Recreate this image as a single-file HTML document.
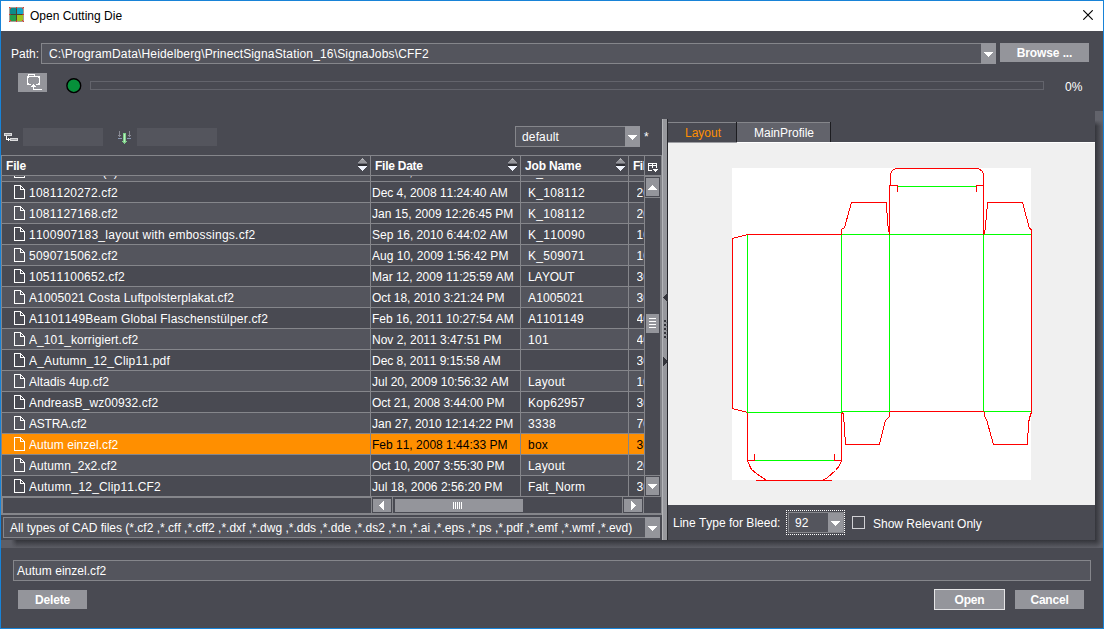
<!DOCTYPE html>
<html>
<head>
<meta charset="utf-8">
<title>Open Cutting Die</title>
<style>
html,body{margin:0;padding:0;}
body{font-kerning:none;text-rendering:optimizeSpeed;width:1104px;height:629px;overflow:hidden;background:#494a52;font-family:"Liberation Sans",sans-serif;font-size:12px;color:#fff;position:relative;}
.abs{position:absolute;}
#title{position:absolute;left:1px;top:1px;width:1102px;height:30px;background:#fff;color:#000;}
#title .t{position:absolute;left:29px;top:7px;font-size:12px;line-height:16px;white-space:nowrap;}
.fld{position:absolute;box-sizing:border-box;border:1px solid #85868b;background:#54555d;white-space:nowrap;overflow:hidden;}
.btn{position:absolute;box-sizing:border-box;background:#94959b;color:#fff;font-weight:bold;text-align:center;white-space:nowrap;}
.arrow{position:absolute;background:#94959b;}
.arrow svg{position:absolute;}

.txt{position:absolute;white-space:nowrap;line-height:14px;}
/* table */
#tbl{position:absolute;left:0;top:155px;width:662px;height:360px;overflow:hidden;}
#rows{position:absolute;left:1px;top:21px;width:644px;height:321px;overflow:hidden;}
.row{position:absolute;left:0;width:644px;height:20px;border-bottom:1px solid #85868b;}
.row.a{background:#494a52;}
.row.b{background:#54555d;}
.row.sel{background:#ff8f00;}
.dk{position:absolute;left:370px;top:0;width:149px;height:20px;background:#494a52;}
.row.sel .k{color:#000;}
.c{position:absolute;top:4px;line-height:14px;white-space:nowrap;overflow:hidden;height:16px;}
.c1{left:28px;width:338px;}
.c2{left:371px;width:147px;}
.c3{left:527px;width:98px;}
.c4{left:635.5px;width:7.5px;}
.ico{position:absolute;left:13px;top:3px;width:11px;height:14px;}
.vl{position:absolute;width:1px;background:#85868b;}
.hl{position:absolute;height:1px;background:#85868b;}
.hd{position:absolute;top:4px;font-weight:bold;line-height:14px;white-space:nowrap;}
.sort{position:absolute;top:3px;width:9px;height:14px;}
</style>
</head>
<body>
<div id="title">
<svg class="abs" style="left:7px;top:5px" width="17" height="17" viewBox="0 0 17 17">
<rect x="1.5" y="1.5" width="14" height="14" fill="#4d4130"/>
<rect x="2" y="2" width="6" height="6" fill="#0d8b8a"/>
<rect x="9" y="2" width="6" height="6" fill="#13a6c9"/>
<rect x="2" y="9" width="6" height="6" fill="#23a04a"/>
<rect x="9" y="9" width="6" height="6" fill="#9cc51f"/>
<path d="M1 1 L3 3 M16 1 L14 3 M1 16 L3 14 M16 16 L14 14 M1 8.5 H2.5 M14.5 8.5 H16 M8.5 1 V2.5 M8.5 14.5 V16" stroke="#e5352b" stroke-width="1" fill="none"/>
</svg>
<div class="t">Open Cutting Die</div>
<svg class="abs" style="left:1082px;top:9px" width="10" height="10" viewBox="0 0 10 10"><path d="M0.3 0.3 L9.7 9.7 M9.7 0.3 L0.3 9.7" stroke="#000" stroke-width="1.15" fill="none"/></svg>
</div>

<!-- path row -->
<div class="txt" style="left:11px;top:47px;">Path:</div>
<div class="fld" style="left:41px;top:43px;width:955px;height:21px;"><div class="txt" style="letter-spacing:0.163px;left:7px;top:3px;">C:\ProgramData\Heidelberg\PrinectSignaStation_16\SignaJobs\CFF2</div></div>
<div class="arrow" style="left:981px;top:43px;width:15px;height:21px;"><svg style="left:3px;top:9px" width="9" height="5" shape-rendering="crispEdges"><path d="M0 0h9v1h-9z M1 1h7v1h-7z M2 2h5v1h-5z M3 3h3v1h-3z M4 4h1v1h-1z" fill="#fff"/></svg></div>
<div class="btn" style="left:1000px;top:43px;width:89px;height:19px;line-height:21px;letter-spacing:-0.1px;">Browse ...</div>

<!-- progress row -->
<div class="btn" style="left:18px;top:73px;width:29px;height:19px;">
<svg class="abs" style="left:0;top:0" width="29" height="19" viewBox="0 0 29 19" shape-rendering="crispEdges"><path d="M10.5 3 V1.5 H16.5 V3 M13 11.5 H9.5 V3.5 H21.5 V11.5 H18" fill="none" stroke="#fff" stroke-width="1"/><path d="M10 4h1v1h-1z M20 4h1v1h-1z M10 10h1v1h-1z M20 10h1v1h-1z M15 11h1v1h-1z M14 12h3v1h-3z M13 13h5v1h-5z M15 14h1v3h-1z M15 16h9v1h-9z" fill="#fff"/></svg>
</div>
<svg class="abs" style="left:64px;top:76px" width="20" height="20" viewBox="64 76 20 20"><circle cx="73.8" cy="85.7" r="6.9" fill="#06903a" stroke="#000" stroke-width="1.4"/></svg>
<div class="abs" style="left:90px;top:81px;width:952px;height:7px;border:1px solid #63646c;"></div>
<div class="txt" style="left:1065px;top:80px;">0%</div>

<!-- filter row -->
<svg class="abs" style="left:4px;top:133px" width="14" height="8" viewBox="0 0 14 8" shape-rendering="crispEdges"><rect x="0.5" y="0.5" width="7" height="2" fill="#a4a5aa" stroke="#dcdcde"/><rect x="6.5" y="5.5" width="7" height="2" fill="#a4a5aa" stroke="#dcdcde"/><path d="M2 3h1v4h-1z M2 6h4v1h-4z M4 5h1v3h-1z" fill="#fff"/></svg>
<svg class="abs" style="left:118px;top:131px" width="13" height="13" viewBox="0 0 13 13" shape-rendering="crispEdges"><path d="M1 0h1v6h-1z M0 4h3v1h-3z M11 0h1v6h-1z M10 4h3v1h-3z" fill="#8a8b95"/><path d="M0 7h4v1h-4z M9 7h4v1h-4z" fill="#8a9ab5"/><path d="M5 2h3v8h-3z M4 10h5v1h-5z M5 11h3v1h-3z M6 12h1v1h-1z" fill="#7fd08a"/><path d="M6 3h1v8h-1z" fill="#b9f2c0"/></svg>
<div class="abs" style="left:23px;top:128px;width:80px;height:18px;background:#54555d;"></div>
<div class="abs" style="left:137px;top:128px;width:80px;height:18px;background:#54555d;"></div>
<div class="fld" style="left:515px;top:126px;width:125px;height:21px;"><div class="txt" style="letter-spacing:0.139px;left:6px;top:3px;">default</div></div>
<div class="arrow" style="left:625px;top:126px;width:15px;height:21px;"><svg style="left:3px;top:9px" width="9" height="5" shape-rendering="crispEdges"><path d="M0 0h9v1h-9z M1 1h7v1h-7z M2 2h5v1h-5z M3 3h3v1h-3z M4 4h1v1h-1z" fill="#fff"/></svg></div>
<div class="txt" style="left:644px;top:130px;">*</div>

<div id="tbl">
<div class="hl" style="left:1px;top:0;width:661px;"></div>
<div class="hl" style="left:1px;top:20px;width:661px;"></div>
<div class="hd" style="left:6px;letter-spacing:-0.2px;">File</div>
<div class="hd" style="left:375px;letter-spacing:-0.25px;">File Date</div>
<div class="hd" style="left:525px;letter-spacing:-0.15px;">Job Name</div>
<div class="hd" style="left:633px;width:11px;overflow:hidden;letter-spacing:-0.5px;">File</div>
<svg class="sort" style="left:358px" viewBox="0 0 9 14" shape-rendering="crispEdges"><path d="M4 0h1v1h-1z M3 1h3v1h-3z" fill="#b0b1b5"/><path d="M2 2h5v1h-5z M1 3h7v1h-7z M0 4h9v1h-9z" fill="#94959b"/><path d="M0 5h9v1h-9z" fill="#6c6d75"/><path d="M0 6h9v2h-9z" fill="#2c2d33"/><path d="M0 8h9v1h-9z M1 9h7v1h-7z M2 10h5v1h-5z M3 11h3v1h-3z M4 12h1v1h-1z" fill="#eef2fb"/></svg><svg class="sort" style="left:508px" viewBox="0 0 9 14" shape-rendering="crispEdges"><path d="M4 0h1v1h-1z M3 1h3v1h-3z" fill="#b0b1b5"/><path d="M2 2h5v1h-5z M1 3h7v1h-7z M0 4h9v1h-9z" fill="#94959b"/><path d="M0 5h9v1h-9z" fill="#6c6d75"/><path d="M0 6h9v2h-9z" fill="#2c2d33"/><path d="M0 8h9v1h-9z M1 9h7v1h-7z M2 10h5v1h-5z M3 11h3v1h-3z M4 12h1v1h-1z" fill="#eef2fb"/></svg><svg class="sort" style="left:616px" viewBox="0 0 9 14" shape-rendering="crispEdges"><path d="M4 0h1v1h-1z M3 1h3v1h-3z" fill="#b0b1b5"/><path d="M2 2h5v1h-5z M1 3h7v1h-7z M0 4h9v1h-9z" fill="#94959b"/><path d="M0 5h9v1h-9z" fill="#6c6d75"/><path d="M0 6h9v2h-9z" fill="#2c2d33"/><path d="M0 8h9v1h-9z M1 9h7v1h-7z M2 10h5v1h-5z M3 11h3v1h-3z M4 12h1v1h-1z" fill="#eef2fb"/></svg>
<div id="rows">
<div class="row b" style="top:-15px"><svg class="ico" viewBox="0 0 11 14" shape-rendering="crispEdges"><path d="M0.5 0.5 H6.5 L10.5 4.5 V13.5 H0.5 Z" fill="none" stroke="#fff" stroke-width="1"/><path d="M6.5 0.5 V4.5 H10.5" fill="none" stroke="#fff" stroke-width="1"/></svg><div class="dk"></div><div class="c c1" style="letter-spacing:0.301px">1081120272 (2).cf2</div><div class="c c2" style="letter-spacing:-0.012px">Mar 12, 2009 11:25:59 AM</div><div class="c c3" style="letter-spacing:0.285px">K_108112</div><div class="c c4" style="letter-spacing:0.062px">20 KB</div></div>
<div class="row a" style="top:6px"><svg class="ico" viewBox="0 0 11 14" shape-rendering="crispEdges"><path d="M0.5 0.5 H6.5 L10.5 4.5 V13.5 H0.5 Z" fill="none" stroke="#fff" stroke-width="1"/><path d="M6.5 0.5 V4.5 H10.5" fill="none" stroke="#fff" stroke-width="1"/></svg><div class="c c1" style="letter-spacing:0.209px">1081120272.cf2</div><div class="c c2" style="letter-spacing:-0.013px">Dec 4, 2008 11:24:40 AM</div><div class="c c3" style="letter-spacing:0.285px">K_108112</div><div class="c c4" style="letter-spacing:0.062px">20 KB</div></div>
<div class="row b" style="top:27px"><svg class="ico" viewBox="0 0 11 14" shape-rendering="crispEdges"><path d="M0.5 0.5 H6.5 L10.5 4.5 V13.5 H0.5 Z" fill="none" stroke="#fff" stroke-width="1"/><path d="M6.5 0.5 V4.5 H10.5" fill="none" stroke="#fff" stroke-width="1"/></svg><div class="dk"></div><div class="c c1" style="letter-spacing:0.209px">1081127168.cf2</div><div class="c c2" style="letter-spacing:0.026px">Jan 15, 2009 12:26:45 PM</div><div class="c c3" style="letter-spacing:0.285px">K_108112</div><div class="c c4" style="letter-spacing:0.062px">20 KB</div></div>
<div class="row a" style="top:48px"><svg class="ico" viewBox="0 0 11 14" shape-rendering="crispEdges"><path d="M0.5 0.5 H6.5 L10.5 4.5 V13.5 H0.5 Z" fill="none" stroke="#fff" stroke-width="1"/><path d="M6.5 0.5 V4.5 H10.5" fill="none" stroke="#fff" stroke-width="1"/></svg><div class="c c1" style="letter-spacing:0.262px">1100907183_layout with embossings.cf2</div><div class="c c2" style="letter-spacing:-0.013px">Sep 16, 2010 6:44:02 AM</div><div class="c c3" style="letter-spacing:0.285px">K_110090</div><div class="c c4" style="letter-spacing:0.062px">10 KB</div></div>
<div class="row b" style="top:69px"><svg class="ico" viewBox="0 0 11 14" shape-rendering="crispEdges"><path d="M0.5 0.5 H6.5 L10.5 4.5 V13.5 H0.5 Z" fill="none" stroke="#fff" stroke-width="1"/><path d="M6.5 0.5 V4.5 H10.5" fill="none" stroke="#fff" stroke-width="1"/></svg><div class="dk"></div><div class="c c1" style="letter-spacing:0.209px">5090715062.cf2</div><div class="c c2" style="letter-spacing:0.013px">Aug 10, 2009 1:56:42 PM</div><div class="c c3" style="letter-spacing:0.285px">K_509071</div><div class="c c4" style="letter-spacing:0.062px">10 KB</div></div>
<div class="row a" style="top:90px"><svg class="ico" viewBox="0 0 11 14" shape-rendering="crispEdges"><path d="M0.5 0.5 H6.5 L10.5 4.5 V13.5 H0.5 Z" fill="none" stroke="#fff" stroke-width="1"/><path d="M6.5 0.5 V4.5 H10.5" fill="none" stroke="#fff" stroke-width="1"/></svg><div class="c c1" style="letter-spacing:0.216px">10511100652.cf2</div><div class="c c2" style="letter-spacing:-0.012px">Mar 12, 2009 11:25:59 AM</div><div class="c c3" style="letter-spacing:-0.294px">LAYOUT</div><div class="c c4" style="letter-spacing:0.062px">30 KB</div></div>
<div class="row b" style="top:111px"><svg class="ico" viewBox="0 0 11 14" shape-rendering="crispEdges"><path d="M0.5 0.5 H6.5 L10.5 4.5 V13.5 H0.5 Z" fill="none" stroke="#fff" stroke-width="1"/><path d="M6.5 0.5 V4.5 H10.5" fill="none" stroke="#fff" stroke-width="1"/></svg><div class="dk"></div><div class="c c1" style="letter-spacing:0.135px">A1005021 Costa Luftpolsterplakat.cf2</div><div class="c c2" style="letter-spacing:-0.044px">Oct 18, 2010 3:21:24 PM</div><div class="c c3" style="letter-spacing:0.129px">A1005021</div><div class="c c4" style="letter-spacing:0.062px">30 KB</div></div>
<div class="row a" style="top:132px"><svg class="ico" viewBox="0 0 11 14" shape-rendering="crispEdges"><path d="M0.5 0.5 H6.5 L10.5 4.5 V13.5 H0.5 Z" fill="none" stroke="#fff" stroke-width="1"/><path d="M6.5 0.5 V4.5 H10.5" fill="none" stroke="#fff" stroke-width="1"/></svg><div class="c c1" style="letter-spacing:0.193px">A1101149Beam Global Flaschenstülper.cf2</div><div class="c c2" style="letter-spacing:-0.013px">Feb 16, 2011 10:27:54 AM</div><div class="c c3" style="letter-spacing:0.129px">A1101149</div><div class="c c4" style="letter-spacing:0.062px">40 KB</div></div>
<div class="row b" style="top:153px"><svg class="ico" viewBox="0 0 11 14" shape-rendering="crispEdges"><path d="M0.5 0.5 H6.5 L10.5 4.5 V13.5 H0.5 Z" fill="none" stroke="#fff" stroke-width="1"/><path d="M6.5 0.5 V4.5 H10.5" fill="none" stroke="#fff" stroke-width="1"/></svg><div class="dk"></div><div class="c c1" style="letter-spacing:0.09px">A_101_korrigiert.cf2</div><div class="c c2">Nov 2, 2011 3:47:51 PM</div><div class="c c3" style="letter-spacing:0.326px">101</div><div class="c c4" style="letter-spacing:0.062px">40 KB</div></div>
<div class="row a" style="top:174px"><svg class="ico" viewBox="0 0 11 14" shape-rendering="crispEdges"><path d="M0.5 0.5 H6.5 L10.5 4.5 V13.5 H0.5 Z" fill="none" stroke="#fff" stroke-width="1"/><path d="M6.5 0.5 V4.5 H10.5" fill="none" stroke="#fff" stroke-width="1"/></svg><div class="c c1" style="letter-spacing:0.193px">A_Autumn_12_Clip11.pdf</div><div class="c c2" style="letter-spacing:-0.028px">Dec 8, 2011 9:15:58 AM</div><div class="c c3"></div><div class="c c4" style="letter-spacing:0.062px">30 KB</div></div>
<div class="row b" style="top:195px"><svg class="ico" viewBox="0 0 11 14" shape-rendering="crispEdges"><path d="M0.5 0.5 H6.5 L10.5 4.5 V13.5 H0.5 Z" fill="none" stroke="#fff" stroke-width="1"/><path d="M6.5 0.5 V4.5 H10.5" fill="none" stroke="#fff" stroke-width="1"/></svg><div class="dk"></div><div class="c c1" style="letter-spacing:0.086px">Altadis 4up.cf2</div><div class="c c2">Jul 20, 2009 10:56:32 AM</div><div class="c c3" style="letter-spacing:0.162px">Layout</div><div class="c c4" style="letter-spacing:0.062px">10 KB</div></div>
<div class="row a" style="top:216px"><svg class="ico" viewBox="0 0 11 14" shape-rendering="crispEdges"><path d="M0.5 0.5 H6.5 L10.5 4.5 V13.5 H0.5 Z" fill="none" stroke="#fff" stroke-width="1"/><path d="M6.5 0.5 V4.5 H10.5" fill="none" stroke="#fff" stroke-width="1"/></svg><div class="c c1" style="letter-spacing:0.122px">AndreasB_wz00932.cf2</div><div class="c c2" style="letter-spacing:-0.044px">Oct 21, 2008 3:44:00 PM</div><div class="c c3" style="letter-spacing:0.285px">Kop62957</div><div class="c c4" style="letter-spacing:0.062px">30 KB</div></div>
<div class="row b" style="top:237px"><svg class="ico" viewBox="0 0 11 14" shape-rendering="crispEdges"><path d="M0.5 0.5 H6.5 L10.5 4.5 V13.5 H0.5 Z" fill="none" stroke="#fff" stroke-width="1"/><path d="M6.5 0.5 V4.5 H10.5" fill="none" stroke="#fff" stroke-width="1"/></svg><div class="dk"></div><div class="c c1" style="letter-spacing:-0.206px">ASTRA.cf2</div><div class="c c2" style="letter-spacing:0.026px">Jan 27, 2010 12:14:22 PM</div><div class="c c3" style="letter-spacing:0.326px">3338</div><div class="c c4" style="letter-spacing:0.062px">70 KB</div></div>
<div class="row sel" style="top:258px"><svg class="ico" viewBox="0 0 11 14" shape-rendering="crispEdges"><path d="M0.5 0.5 H6.5 L10.5 4.5 V13.5 H0.5 Z" fill="none" stroke="#fff" stroke-width="1"/><path d="M6.5 0.5 V4.5 H10.5" fill="none" stroke="#fff" stroke-width="1"/></svg><div class="c c1" style="letter-spacing:0.031px">Autum einzel.cf2</div><div class="c c2 k">Feb 11, 2008 1:44:33 PM</div><div class="c c3 k" style="letter-spacing:0.217px">box</div><div class="c c4 k" style="letter-spacing:0.062px">30 KB</div></div>
<div class="row b" style="top:279px"><svg class="ico" viewBox="0 0 11 14" shape-rendering="crispEdges"><path d="M0.5 0.5 H6.5 L10.5 4.5 V13.5 H0.5 Z" fill="none" stroke="#fff" stroke-width="1"/><path d="M6.5 0.5 V4.5 H10.5" fill="none" stroke="#fff" stroke-width="1"/></svg><div class="dk"></div><div class="c c1" style="letter-spacing:0.092px">Autumn_2x2.cf2</div><div class="c c2" style="letter-spacing:-0.044px">Oct 10, 2007 3:55:30 PM</div><div class="c c3" style="letter-spacing:0.162px">Layout</div><div class="c c4" style="letter-spacing:0.062px">20 KB</div></div>
<div class="row a" style="top:300px"><svg class="ico" viewBox="0 0 11 14" shape-rendering="crispEdges"><path d="M0.5 0.5 H6.5 L10.5 4.5 V13.5 H0.5 Z" fill="none" stroke="#fff" stroke-width="1"/><path d="M6.5 0.5 V4.5 H10.5" fill="none" stroke="#fff" stroke-width="1"/></svg><div class="c c1" style="letter-spacing:0.196px">Autumn_12_Clip11.CF2</div><div class="c c2" style="letter-spacing:0.013px">Jul 18, 2006 2:56:20 PM</div><div class="c c3" style="letter-spacing:0.11px">Falt_Norm</div><div class="c c4" style="letter-spacing:0.062px">30 KB</div></div></div>
<!-- column chooser icon -->
<svg class="abs" style="left:648px;top:8px" width="10" height="9" viewBox="648 163 10 9" shape-rendering="crispEdges"><path d="M648.5 171 V163.5 H656.5 V168 M648 165.5 H657 M652.5 163 V168 M648 170.5 H652" fill="none" stroke="#fff" stroke-width="1"/><path d="M653 169h5v1h-5z M654 170h3v1h-3z M655 171h1v1h-1z" fill="#fff"/></svg>
<!-- column lines -->
<div class="vl" style="left:1px;top:0;height:360px;"></div>
<div class="vl" style="left:370px;top:1px;height:341px;"></div>
<div class="vl" style="left:520px;top:1px;height:341px;"></div>
<div class="vl" style="left:628px;top:1px;height:341px;"></div>
<div class="vl" style="left:644px;top:1px;height:341px;"></div>
<div class="vl" style="left:660px;top:21px;height:321px;"></div>
<div class="vl" style="left:661px;top:0;height:360px;"></div>
<div class="vl" style="left:371px;top:342px;height:16px;"></div>
<div class="vl" style="left:392px;top:342px;height:16px;"></div>
<div class="vl" style="left:622px;top:342px;height:16px;"></div>
<div class="vl" style="left:643px;top:342px;height:16px;"></div>
<div class="hl" style="left:645px;top:21px;width:16px;"></div>
<div class="hl" style="left:645px;top:42px;width:16px;"></div>
<div class="hl" style="left:645px;top:320px;width:16px;"></div>
<div class="hl" style="left:645px;top:341px;width:16px;"></div>
<div class="hl" style="left:1px;top:358px;width:661px;height:2px;"></div>
<div class="hl" style="left:1px;top:342px;width:370px;"></div>
<div class="vl" style="left:2px;top:342px;height:16px;"></div>
<!-- vertical scrollbar -->
<div class="arrow" style="left:646px;top:23px;width:13px;height:18px;"><svg style="left:2px;top:7px" width="9" height="5" shape-rendering="crispEdges"><path d="M4 0h1v1h-1z M3 1h3v1h-3z M2 2h5v1h-5z M1 3h7v1h-7z M0 4h9v1h-9z" fill="#fff"/></svg></div>
<div class="abs" style="left:646px;top:159px;width:13px;height:19px;background:#94959b;"><div class="abs" style="left:3px;top:4px;width:7px;height:1px;background:#fff;box-shadow:0 3px 0 #fff,0 6px 0 #fff,0 9px 0 #fff;"></div></div>
<div class="arrow" style="left:646px;top:322px;width:13px;height:18px;"><svg style="left:2px;top:7px" width="9" height="5" shape-rendering="crispEdges"><path d="M0 0h9v1h-9z M1 1h7v1h-7z M2 2h5v1h-5z M3 3h3v1h-3z M4 4h1v1h-1z" fill="#fff"/></svg></div>
<!-- horizontal scrollbar -->
<div class="arrow" style="left:373px;top:344px;width:18px;height:13px;"><svg style="left:6px;top:2px" width="5" height="9" shape-rendering="crispEdges"><path d="M4 0h1v9h-1z M3 1h1v7h-1z M2 2h1v5h-1z M1 3h1v3h-1z M0 4h1v1h-1z" fill="#fff"/></svg></div>
<div class="abs" style="left:395px;top:344px;width:128px;height:13px;background:#94959b;"><div class="abs" style="left:58px;top:3px;width:1px;height:7px;background:#fff;box-shadow:2px 0 0 #fff,4px 0 0 #fff,6px 0 0 #fff,8px 0 0 #fff;"></div></div>
<div class="arrow" style="left:624px;top:344px;width:18px;height:13px;"><svg style="left:7px;top:2px" width="5" height="9" shape-rendering="crispEdges"><path d="M0 0h1v9h-1z M1 1h1v7h-1z M2 2h1v5h-1z M3 3h1v3h-1z M4 4h1v1h-1z" fill="#fff"/></svg></div>
</div>

<!-- file type filter -->
<div class="fld" style="left:3px;top:517px;width:657px;height:21px;"><div class="txt" style="left:6px;top:3px;">All types of CAD files (*.cf2 ,*.cff ,*.cff2 ,*.dxf ,*.dwg ,*.dds ,*.dde ,*.ds2 ,*.n ,*.ai ,*.eps ,*.ps ,*.pdf ,*.emf ,*.wmf ,*.evd)</div></div>
<div class="arrow" style="left:645px;top:517px;width:15px;height:21px;"><svg style="left:3px;top:9px" width="9" height="5" shape-rendering="crispEdges"><path d="M0 0h9v1h-9z M1 1h7v1h-7z M2 2h5v1h-5z M3 3h3v1h-3z M4 4h1v1h-1z" fill="#fff"/></svg></div>

<!-- splitter -->
<div class="abs" style="left:662px;top:119px;width:6px;height:421px;background:#97989d;border-left:1px solid #b4b5b9;border-right:1px solid #25262b;box-sizing:border-box;"></div>
<svg class="abs" style="left:663px;top:290px" width="5" height="80" viewBox="0 0 5 80" shape-rendering="crispEdges">
<path d="M4 3h1v9h-1z M3 4h1v7h-1z M2 5h1v5h-1z M1 6h1v3h-1z M0 7h1v1h-1z" fill="#34353b"/>
<path d="M0 67h1v9h-1z M1 68h1v7h-1z M2 69h1v5h-1z M3 70h1v3h-1z M4 71h1v1h-1z" fill="#34353b"/>
<path d="M1 30h2v2h-2z M1 34h2v2h-2z M1 38h2v2h-2z M1 42h2v2h-2z M1 46h2v2h-2z" fill="#34353b"/>
<path d="M3 32h1v1h-1z M3 36h1v1h-1z M3 40h1v1h-1z M3 44h1v1h-1z M3 48h1v1h-1z" fill="#74757b"/>
</svg>

<!-- right panel -->
<div class="hl" style="left:668px;top:122px;width:163px;background:#85868b;"></div>
<div class="abs" style="left:668px;top:123px;width:68px;height:19px;background:#494a52;"></div>
<div class="abs" style="left:737px;top:123px;width:93px;height:19px;background:#62636b;"></div>
<div class="vl" style="left:736px;top:122px;height:20px;background:#1c1c20;"></div>
<div class="vl" style="left:830px;top:122px;height:20px;background:#1c1c20;"></div>
<div class="txt" style="left:685px;top:126px;color:#ff8f00;">Layout</div>
<div class="txt" style="left:754px;top:126px;">MainProfile</div>
<div class="abs" style="left:668px;top:142px;width:427px;height:363px;background:#f0f0f0;"></div>
<div class="hl" style="left:737px;top:142px;width:358px;background:#fff;"></div>
<div class="hl" style="left:668px;top:142px;width:69px;background:#9c9da2;"></div>
<div class="abs" style="left:732px;top:168px;width:299px;height:312px;background:#fff;"></div>
<!--DIE-->
<svg class="abs" style="left:725px;top:160px" width="320" height="330" viewBox="724.5 159.5 320 330" shape-rendering="crispEdges" fill="none" stroke-width="1">
<g stroke="#00ff00">
<path d="M747 234 V412 M841 234 V412 M889 234 V411 M983 234 V411 M841 234 H1031 M747 412 H841 M841 411 H889 M983 411 H1031 M897 186 H976 M754 460 H834"/>
</g>
<g stroke="#ff0000">
<path d="M747 234 L732 238 V408 L747 412"/>
<path d="M746 234 H841"/>
<path d="M841 234 V229 L844 227 L851 202 H886 L887 222 L889 234"/>
<path d="M889 234 V185 H897 V191 M890 185 V175 A7 7 0 0 1 897 168 H976 A7 7 0 0 1 983 175 V234 M976 191 V185 H983"/>
<path d="M984 234 L986 215 L987 202 H1022 L1029 228 L1031 229 V412"/>
<path d="M984 411 V416 L986 419 L993 444 H1027 L1028 422 L1030 414 L1031 412"/>
<path d="M889 411 H983"/>
<path d="M842 412 L843 414 L845 444 H879 L885 420 L889 416 V411"/>
<path d="M747 412 V460 H754 V453 M841 412 V460 H834 V453"/>
<path d="M747 460 L749 465 L751 469 L756 473 L766 480 M755 480 H831 M841 460 L839 465 L835 470 L827 477 L822 480"/>
</g>
</svg>

<div class="txt" style="left:673px;top:516px;">Line Type for Bleed:</div>
<div class="abs" style="left:786px;top:510px;width:57px;height:23px;border:1px dotted #fff;"></div>
<div class="fld" style="left:788px;top:512px;width:56px;height:21px;"><div class="txt" style="left:6px;top:3px;">92</div></div>
<div class="arrow" style="left:828px;top:513px;width:15px;height:19px;"><svg style="left:3px;top:8px" width="9" height="5" shape-rendering="crispEdges"><path d="M0 0h9v1h-9z M1 1h7v1h-7z M2 2h5v1h-5z M3 3h3v1h-3z M4 4h1v1h-1z" fill="#fff"/></svg></div>
<div class="abs" style="left:852px;top:516px;width:11px;height:11px;border:1px solid #d0d0d4;"></div>
<div class="txt" style="left:873px;top:517px;">Show Relevant Only</div>

<!-- shadows -->
<div class="abs" style="left:1095px;top:111px;width:8px;height:429px;background:linear-gradient(to right,#34353b,#5d5e66);"></div>
<div class="abs" style="left:1095px;top:111px;width:8px;height:9px;background:#62636b;"></div>
<div class="abs" style="left:1095px;top:120px;width:8px;height:6px;background:linear-gradient(to bottom,#62636b,rgba(98,99,107,0));"></div>
<div class="abs" style="left:1px;top:540px;width:1094px;height:8px;background:linear-gradient(to bottom,#34353b,#5d5e66);"></div>
<div class="abs" style="left:1095px;top:540px;width:8px;height:8px;background:radial-gradient(circle at 0 0,#34353b 0,#5d5e66 8px);"></div>
<div class="abs" style="left:1px;top:540px;width:10px;height:8px;background:#5d5e66;"></div>
<div class="abs" style="left:11px;top:540px;width:6px;height:8px;background:linear-gradient(to right,#5d5e66,rgba(93,94,102,0));"></div>

<!-- bottom -->
<div class="fld" style="left:13px;top:560px;width:1078px;height:21px;"><div class="txt" style="letter-spacing:0.031px;left:3px;top:3px;">Autum einzel.cf2</div></div>
<div class="btn" style="left:18px;top:590px;width:69px;height:19px;line-height:21px;letter-spacing:-0.2px;">Delete</div>
<div class="btn" style="left:934px;top:589px;width:71px;height:21px;line-height:21px;letter-spacing:-0.2px;border:1px solid #e4e4e6;">Open</div>
<div class="btn" style="left:1015px;top:590px;width:69px;height:19px;line-height:21px;letter-spacing:-0.2px;">Cancel</div>

<!-- window border -->
<div class="abs" style="left:0;top:0;width:1104px;height:1px;background:#1883d7;"></div>
<div class="abs" style="left:0;top:628px;width:1104px;height:1px;background:#1883d7;"></div>
<div class="abs" style="left:0;top:0;width:1px;height:629px;background:#1883d7;"></div>
<div class="abs" style="left:1103px;top:0;width:1px;height:629px;background:#1883d7;"></div>
</body>
</html>
